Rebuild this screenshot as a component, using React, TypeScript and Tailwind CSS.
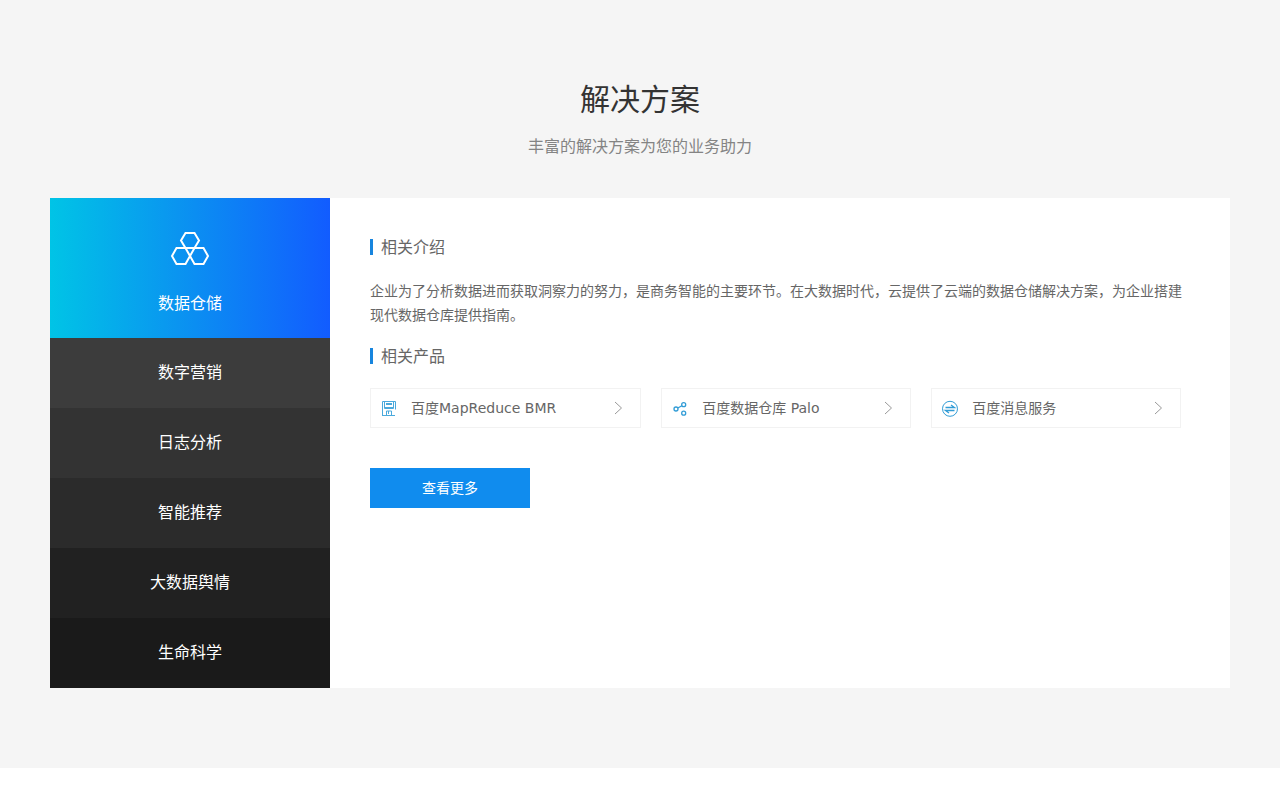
import React, { useState } from 'react';

const solutions = [
  { name: '数据仓储', bg: 'bg-[#3c3c3c]' },
  { name: '数字营销', bg: 'bg-[#3c3c3c]' },
  { name: '日志分析', bg: 'bg-[#333333]' },
  { name: '智能推荐', bg: 'bg-[#2b2b2b]' },
  { name: '大数据舆情', bg: 'bg-[#212121]' },
  { name: '生命科学', bg: 'bg-[#1a1a1a]' },
];

function HexagonsIcon() {
  return (
    <svg width="40" height="36" viewBox="0 0 40 36" fill="none" stroke="currentColor" strokeWidth="2" aria-hidden="true">
      <path d="M15.500 3h9l4.500 7.500-4.500 7.500h-9L11 10.500z" />
      <path d="M6.500 18h9l4.500 8-4.500 8h-9L2 26z" />
      <path d="M24.500 18h9l4.500 8-4.500 8h-9L20 26z" />
    </svg>
  );
}

function DiskIcon() {
  return (
    <svg width="18" height="18" viewBox="0 0 18 18" fill="none" stroke="#4aa9dc" aria-hidden="true">
      <path d="M2 16.500h13M2.500 16.500V2.500h13v8" />
      <path d="M4.500 2.500v7h9v-7" />
      <path d="M6 5h6" strokeWidth="2" />
      <path d="M4.500 8.500h9M6.500 16v-4h5v4M8.500 12v3" />
    </svg>
  );
}

function ShareIcon() {
  return (
    <svg width="18" height="18" viewBox="0 0 18 18" fill="none" stroke="#319cd6" strokeWidth="1.3" aria-hidden="true">
      <circle cx="5" cy="10" r="2" />
      <circle cx="12.700" cy="5.700" r="2" />
      <circle cx="12.700" cy="14.200" r="2" />
      <path d="M6.800 9l4.100-2.300" />
    </svg>
  );
}

function ExchangeIcon() {
  return (
    <svg width="18" height="18" viewBox="0 0 18 18" fill="none" stroke="#319cd6" aria-hidden="true">
      <circle cx="9" cy="9.800" r="7.500" />
      <path d="M4.500 8.500h9l-3.500-2.500M13.500 11.500h-9l3.500 2.500" strokeWidth="1.3" />
    </svg>
  );
}

const products = [
  { name: '百度MapReduce BMR', Icon: DiskIcon },
  { name: '百度数据仓库 Palo', Icon: ShareIcon },
  { name: '百度消息服务', Icon: ExchangeIcon },
];

function Heading({ children }: { children: React.ReactNode }) {
  return (
    <h3 className="flex items-start gap-2 text-base leading-5 text-[#666]">
      <span className="mt-px h-4 w-[3px] bg-[#1785de]" />
      {children}
    </h3>
  );
}

export default function App() {
  const [active, setActive] = useState(0);
  return (
    <section className="bg-[#f5f5f5] px-[50px] py-20 font-['DejaVu_Sans','Noto_Sans_CJK_SC',sans-serif]">
      <header className="mb-10 text-center">
        <h2 className="text-[30px] leading-10 text-[#333]">解决方案</h2>
        <p className="mt-4 text-base leading-[22px] text-[#848484]">丰富的解决方案为您的业务助力</p>
      </header>
      <div className="mx-auto flex max-w-[1180px] bg-white">
        <nav className="w-[280px] shrink-0 text-base text-white">
          {solutions.map(({ name, bg }, i) => (
            <button
              key={name}
              type="button"
              onClick={() => setActive(i)}
              className={
                i === active
                  ? 'flex h-[140px] w-full flex-col items-center justify-center gap-7 bg-[linear-gradient(90deg,#00c4e6,#0a95f0_45%,#125cff)] pt-2'
                  : `flex h-[70px] w-full items-center justify-center ${bg}`
              }
            >
              {i === active && <HexagonsIcon />}
              <span className="leading-5">{name}</span>
            </button>
          ))}
        </nav>
        <div className="min-w-0 flex-1 py-10 pr-12 pl-10">
          <Heading>相关介绍</Heading>
          <p className="mt-[21px] mb-5 text-sm leading-6 text-[#666]">
            企业为了分析数据进而获取洞察力的努力，是商务智能的主要环节。在大数据时代，云提供了云端的数据仓储解决方案，为企业搭建现代数据仓库提供指南。
          </p>
          <Heading>相关产品</Heading>
          <ul className="mt-[21px] flex flex-wrap gap-5">
            {products.map(({ name, Icon }) => (
              <li key={name}>
                <a href="#" className="flex h-10 min-w-[250px] items-center border border-[#f2f2f2] pr-4 pl-[9px] text-sm text-[#666]">
                  <Icon />
                  <span className="mr-14 ml-[13px] whitespace-nowrap">{name}</span>
                  <svg className="ml-auto" width="12" height="14" viewBox="0 0 12 14" fill="none" stroke="#999" aria-hidden="true">
                    <path d="M3 1l6.500 6-6.500 6" />
                  </svg>
                </a>
              </li>
            ))}
          </ul>
          <button type="button" className="mt-10 h-10 w-40 bg-[#108cee] text-sm text-white">
            查看更多
          </button>
        </div>
      </div>
    </section>
  );
}
